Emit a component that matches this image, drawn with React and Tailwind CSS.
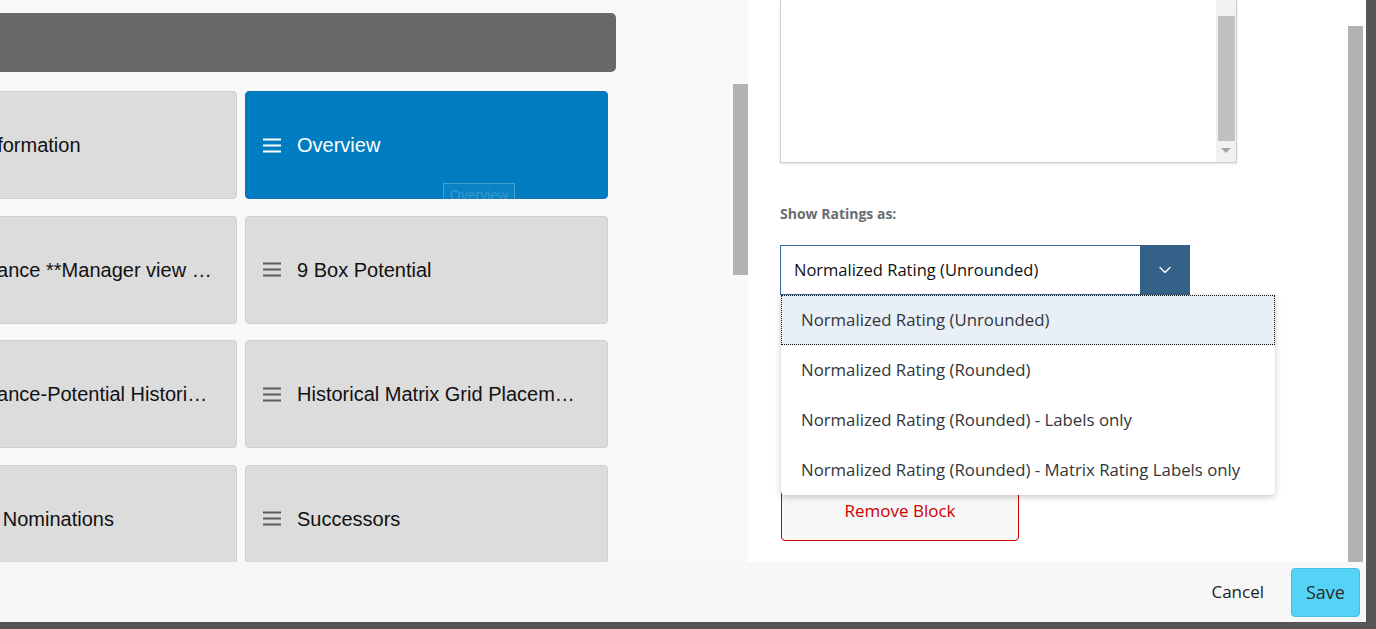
import { ChevronDown } from 'lucide-react'

const tiles = [
  { id: 1, title: 'Basic Information' },
  { id: 2, title: 'Overview', active: true },
  { id: 3, title: 'Performance **Manager view only**' },
  { id: 4, title: '9 Box Potential' },
  { id: 5, title: 'Performance-Potential Historical Matrix' },
  { id: 6, title: 'Historical Matrix Grid Placements' },
  { id: 7, title: 'Pipeline Nominations' },
  { id: 8, title: 'Successors' },
]

const options = [
  'Normalized Rating (Unrounded)',
  'Normalized Rating (Rounded)',
  'Normalized Rating (Rounded) - Labels only',
  'Normalized Rating (Rounded) - Matrix Rating Labels only',
]

function MenuIcon({ color }) {
  return (
    <svg width="18" height="15" viewBox="0 0 18 15" className="shrink-0">
      <rect x="0" y="0.5" width="18" height="2" fill={color} />
      <rect x="0" y="6.5" width="18" height="2" fill={color} />
      <rect x="0" y="12.5" width="18" height="2" fill={color} />
    </svg>
  )
}

function Tile({ tile }) {
  const active = tile.active
  return (
    <div
      className={`relative flex items-center h-[108px] w-[363px] rounded-[4px] border pl-[17px] pr-[22px] gap-[16px] ${
        active ? 'bg-[#007cc1] border-[#0a74b5] text-white' : 'bg-[#dcdcdc] border-[#cfcfcf] text-[#111]'
      }`}
    >
      <MenuIcon color={active ? '#ffffff' : '#5a5a5a'} />
      <span className="flex-1 min-w-0 truncate text-[20px] leading-[24px]">{tile.title}</span>

      {/* drag ghost */}
      {active && (
        <div className="absolute left-[197px] top-[91px] w-[72px] h-[24px] flex items-center justify-center bg-white/[0.04] border border-white/25 text-[14px] leading-[16px] text-white/20">
          Overview
        </div>
      )}
    </div>
  )
}

function App() {
  return (
    <div className="w-[1376px] h-[629px] bg-[#565656] overflow-hidden" style={{ fontFamily: '"Liberation Sans", Arial, sans-serif' }}>
      <div className="w-[1366px] h-[622px] flex flex-col">
        <div className="flex h-[562px]">
          {/* Left: block tiles */}
          <div className="w-[733px] bg-[#f8f8f8] overflow-hidden">
            <div className="mt-[13px] h-[59px] w-[616px] bg-[#686868] rounded-r-[5px]"></div>
            <div className="mt-[19px] -ml-[126px] grid grid-cols-[363px_363px] gap-x-[8px] gap-y-[16.5px]">
              {tiles.map((tile) => (
                <Tile key={tile.id} tile={tile} />
              ))}
            </div>
          </div>

          {/* Left scrollbar */}
          <div className="w-[15px] bg-[#f9f9f9] pt-[84px]">
            <div className="h-[191px] bg-[#b2b2b2]"></div>
          </div>

          {/* Right: block settings */}
          <div
            className="relative w-[600px] bg-white pl-[32px]"
            style={{ fontFamily: '"Open Sans", "Noto Sans", sans-serif' }}
          >
            <div className="flex w-[457px] h-[163px] border-x border-b border-[#cfcfcf] bg-white shadow-[0_1px_2px_rgba(0,0,0,0.12)]">
              <div className="flex-1"></div>
              <div className="w-[20px] bg-[#f1f1f1] flex flex-col items-center">
                <div className="mt-[16px] w-[17px] h-[125px] bg-[#c1c1c1]"></div>
                <svg width="10" height="6" viewBox="0 0 10 6" className="mt-[7px]">
                  <path d="M0 0 L10 0 L5 5 Z" fill="#a3a3a3" />
                </svg>
              </div>
            </div>

            <div className="mt-[41px] text-[14px] leading-[20px] font-bold text-[#6a6d70]">Show Ratings as:</div>

            <div className="relative mt-[21px] w-[410px]">
              <div className="flex h-[50px] border border-[#3a6c9a] bg-white">
                <div className="flex-1 flex items-center pl-[13px] text-[16.5px] text-[#111]">
                  Normalized Rating (Unrounded)
                </div>
                <div className="w-[50px] -my-px -mr-px bg-[#346187] flex items-center justify-center">
                  <ChevronDown size={20} strokeWidth={1.5} color="#ffffff" />
                </div>
              </div>

              {/* Open list */}
              <div className="absolute left-[1px] top-full z-10 w-[494px] bg-white rounded-b-[4px] shadow-[0_2px_6px_rgba(0,0,0,0.22)]">
                {options.map((opt, i) => (
                  <div
                    key={opt}
                    className={`h-[50px] flex items-center pl-[20px] text-[16.8px] text-[#32363a] ${
                      i === 0 ? 'bg-[#e9eff7] outline-1 outline-dotted outline-[#111] -outline-offset-1' : ''
                    }`}
                  >
                    {opt}
                  </div>
                ))}
              </div>
            </div>

            <button className="mt-[186px] ml-[1px] w-[238px] h-[60px] rounded-[4px] border border-[#cc0000] bg-[#f7f7f7] text-[17px] text-[#cc0000]">
              Remove Block
            </button>
          </div>

          {/* Right scrollbar */}
          <div className="w-[18px] bg-white pt-[26px]">
            <div className="w-[15px] h-[536px] bg-[#b2b2b2]"></div>
          </div>
        </div>

        {/* Footer */}
        <div
          className="h-[60px] bg-[#f7f7f7] flex items-center justify-end gap-[27px] pr-[6px]"
          style={{ fontFamily: '"Open Sans", "Noto Sans", sans-serif' }}
        >
          <button className="text-[17px] text-[#222]">Cancel</button>
          <button className="w-[69px] h-[49px] rounded-[4px] border border-[#3fc0e4] bg-[#54d3f7] text-[18px] text-[#2a2a2a]">
            Save
          </button>
        </div>
      </div>
    </div>
  )
}

export default App
